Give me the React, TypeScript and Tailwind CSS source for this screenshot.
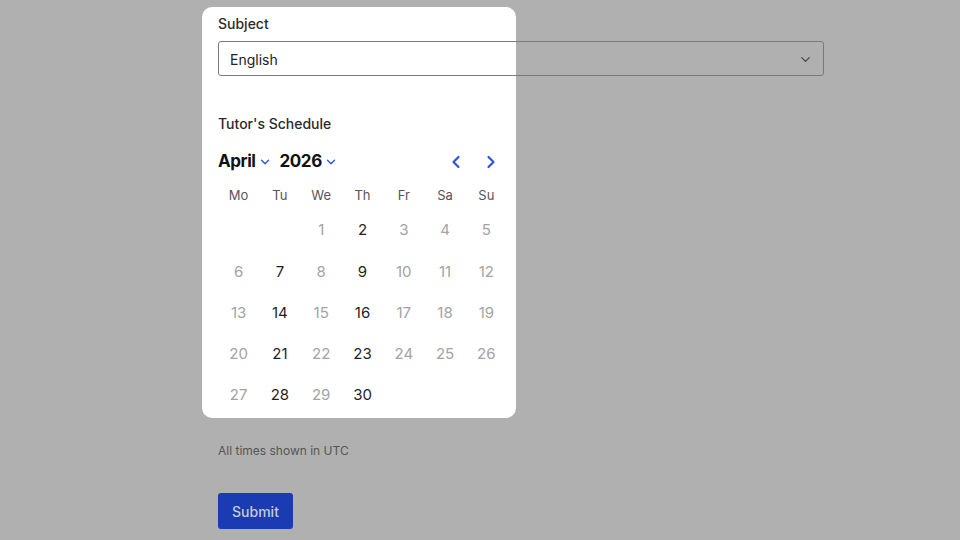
import { ChevronDown, ChevronLeft, ChevronRight } from "lucide-react";

const weekdays = ["Mo", "Tu", "We", "Th", "Fr", "Sa", "Su"];
const available = [2, 7, 9, 14, 16, 21, 23, 28, 30];

export default function App() {
  // April 2026 starts on a Wednesday
  const cells: (number | null)[] = [null, null];
  for (let d = 1; d <= 30; d++) cells.push(d);

  return (
    <div className="relative min-h-[540px] bg-[#b0b0b0] font-['Inter','Liberation_Sans',sans-serif] overflow-hidden">
      {/* spotlight card over the dimmed page */}
      <div className="absolute left-[202px] top-[7px] w-[314px] h-[411px] bg-white rounded-[10px]" />

      <div className="relative ml-[218px] w-[606px] pt-[14px]">
        <div className="text-[14px] leading-5 font-medium text-[#2b2b2b]">Subject</div>
        <div className="mt-[7px] h-[35px] border border-[#7a7a7a] rounded-[3px] flex items-center justify-between pl-[11px] pr-[10px] pt-[1px]">
          <span className="text-[14px] text-[#222]">English</span>
          <ChevronDown size={15} strokeWidth={2.2} className="text-[#4a4a4a]" />
        </div>

        <div className="mt-[38px] text-[14px] leading-5 font-medium text-[#2b2b2b]">Tutor's Schedule</div>

        <div className="w-[289px]">
          <div className="mt-[14px] h-[28px] flex items-center justify-between">
            <div className="flex items-center">
              <span className="text-[17px] font-bold tracking-tight text-[#111]">April</span>
              <ChevronDown size={14} strokeWidth={2.4} className="text-[#2f54d4] ml-[2px]" />
              <span className="text-[17px] font-bold tracking-tight text-[#111] ml-[8px]">2026</span>
              <ChevronDown size={14} strokeWidth={2.4} className="text-[#2f54d4] ml-[2px]" />
            </div>
            <div className="flex items-center gap-[15px] mr-[6px]">
              <ChevronLeft size={20} strokeWidth={2.6} className="text-[#2f54d4]" />
              <ChevronRight size={20} strokeWidth={2.6} className="text-[#2f54d4]" />
            </div>
          </div>

          <div className="mt-[10px] grid grid-cols-7 h-5">
            {weekdays.map((w) => (
              <div key={w} className="flex items-center justify-center text-[13px] text-[#555]">
                {w}
              </div>
            ))}
          </div>

          <div className="mt-[4px] grid grid-cols-7">
            {cells.map((d, i) => (
              <div
                key={i}
                className={`h-[41.25px] flex items-center justify-center text-[15px] ${
                  d && available.includes(d) ? "text-[#1f1f1f]" : "text-[#a3a3a3]"
                }`}
              >
                {d ?? ""}
              </div>
            ))}
          </div>
        </div>

        <div className="mt-[27px] text-[12px] leading-4 text-[#555]">All times shown in UTC</div>

        <button className="mt-[34px] w-[75px] h-[36px] rounded-[3px] bg-[#1a3bb2] text-[14px] font-medium text-[#c6cadb]">
          Submit
        </button>
      </div>
    </div>
  );
}
